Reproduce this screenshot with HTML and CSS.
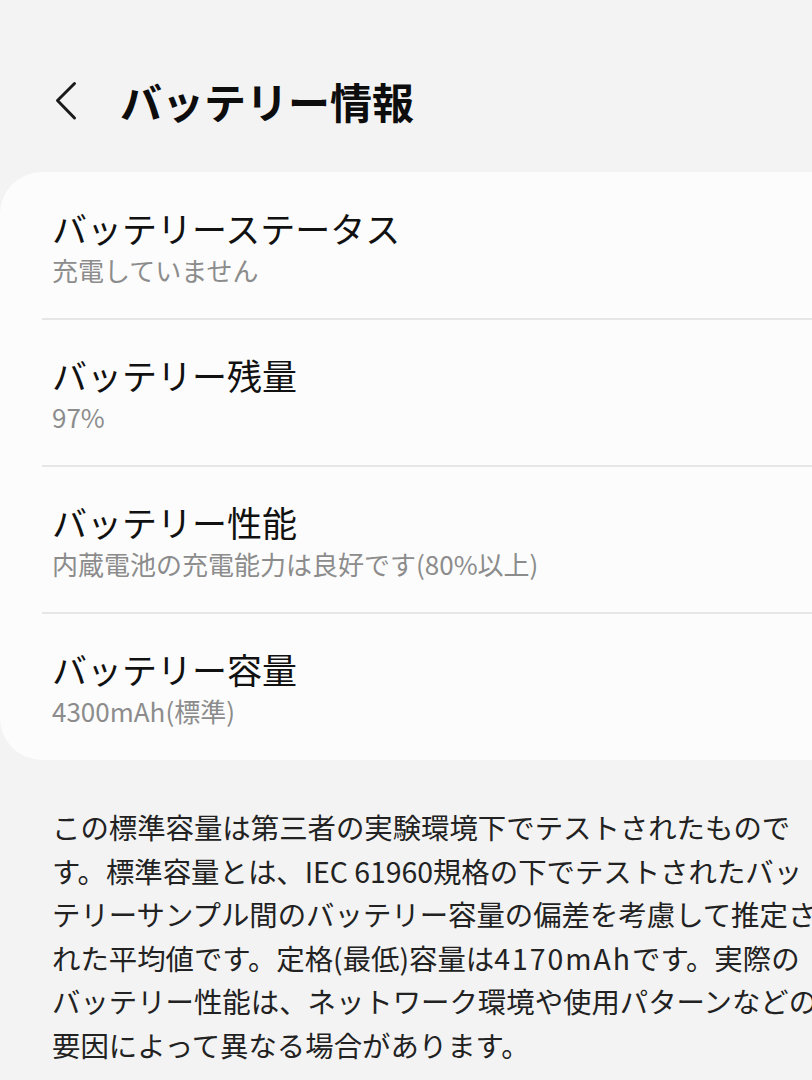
FILE: index.html
```html
<!DOCTYPE html>
<html lang="ja">
<head>
<meta charset="utf-8">
<title>バッテリー情報</title>
<link rel="stylesheet" href="styles.css">
</head>
<body>
<div class="page">
  <header class="header">
    <svg class="back" viewBox="0 0 22 40" width="22" height="40" aria-hidden="true">
      <path d="M19.5 2.5 L2.5 19.5 L19.5 37" fill="none" stroke="#1a1a1a" stroke-width="3" stroke-linecap="round" stroke-linejoin="round"/>
    </svg>
    <h1 class="title">バッテリー情報</h1>
  </header>

  <section class="card">
    <div class="row">
      <div class="row-title">バッテリーステータス</div>
      <div class="row-sub">充電していません</div>
    </div>
    <div class="row">
      <div class="row-title">バッテリー残量</div>
      <div class="row-sub">97%</div>
    </div>
    <div class="row">
      <div class="row-title">バッテリー性能</div>
      <div class="row-sub">内蔵電池の充電能力は良好です(80%以上)</div>
    </div>
    <div class="row row-last">
      <div class="row-title">バッテリー容量</div>
      <div class="row-sub">4300mAh(標準)</div>
    </div>
  </section>

  <p class="note">この標準容量は第三者の実験環境下でテストされたものです。標準容量とは、IEC 61960規格の下でテストされたバッテリーサンプル間のバッテリー容量の偏差を考慮して推定された平均値です。定格(最低)容量は<span class="latin">4170mAh</span>です。実際のバッテリー性能は、ネットワーク環境や使用パターンなどの要因によって異なる場合があります。</p>
</div>
</body>
</html>
```

FILE: styles.css
```css
html, body {
  margin: 0;
  padding: 0;
}

body {
  background: #f3f3f3;
  font-family: "Noto Sans CJK JP", "Noto Sans", sans-serif;
  color: #111;
  overflow: hidden;
  width: 812px;
  height: 1080px;
}

.page {
  width: 900px;
}

.header {
  display: flex;
  align-items: center;
  height: 172px;
  padding-left: 55px;
  box-sizing: border-box;
  padding-top: 30px;
}

.back {
  display: block;
  flex: none;
}

.title {
  margin: 0 0 0 43px;
  font-size: 42px;
  line-height: 50px;
  font-weight: 700;
  color: #0d0d0d;
}

.card {
  background: #fcfcfc;
  border-radius: 42px;
  padding-top: 1px;
  width: 880px;
}

.row {
  margin-left: 42px;
  padding: 34px 10px 27px;
  border-bottom: 2px solid #e6e6e6;
}

.row-last {
  border-bottom: none;
  padding-bottom: 28px;
}

.row-title {
  font-size: 35px;
  line-height: 42px;
  color: #111;
}

.row-sub {
  font-size: 26px;
  line-height: 42px;
  color: #8c8c8c;
}

.note {
  margin: 45px 0 0 52px;
  width: 770px;
  font-size: 28.4px;
  line-height: 43.5px;
  color: #222;
}

.latin {
  letter-spacing: 2px;
}
```
